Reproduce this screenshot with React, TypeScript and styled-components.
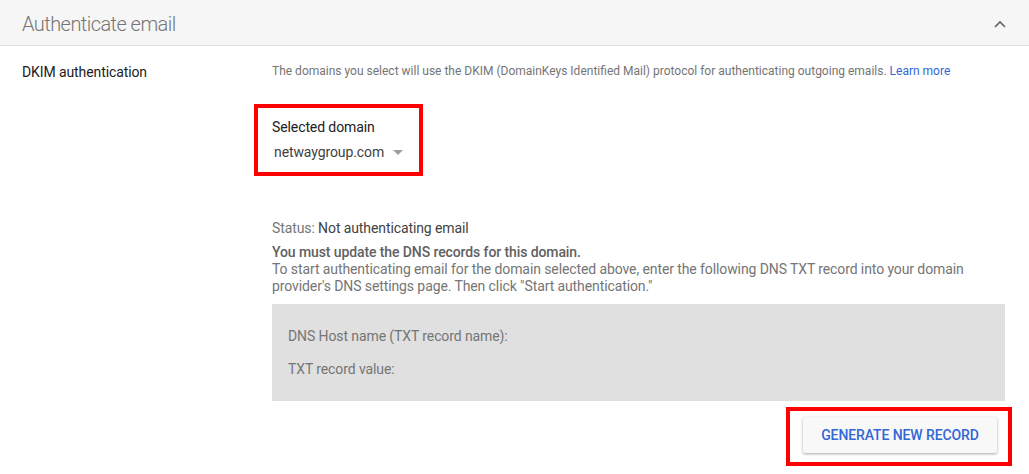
import React from "react";
import styled, { createGlobalStyle } from "styled-components";

const Global = createGlobalStyle`
  html, body { margin: 0; padding: 0; background: #ffffff; }
  body { font-family: Roboto, "Liberation Sans", Arial, sans-serif; -webkit-font-smoothing: antialiased; }
  * { box-sizing: border-box; }
`;

const Page = styled.div`
  width: 1029px;
  height: 474px;
  overflow: hidden;
  background: #fff;
`;

const Header = styled.div`
  height: 46px;
  display: flex;
  align-items: center;
  justify-content: space-between;
  padding: 2px 23px 0 22px;
  background: #f6f6f6;
  border-bottom: 1px solid #e0e0e0;
`;

const Title = styled.h2`
  margin: 0;
  font-size: 20px;
  font-weight: 300;
  color: #757575;
  letter-spacing: -0.55px;
`;

const Section = styled.div`
  display: grid;
  grid-template-columns: 250px 733px;
  padding: 16px 0 0 22px;
`;

const Label = styled.div`
  font-size: 14px;
  line-height: 20px;
  color: #212121;
  letter-spacing: -0.1px;
`;

const Content = styled.div`
  display: flex;
  flex-direction: column;
  align-items: flex-start;
  margin-top: -1px;
`;

const Description = styled.p`
  margin: 0;
  font-size: 12px;
  line-height: 20px;
  color: #757575;
  letter-spacing: 0;
`;

const Link = styled.a`
  color: #3367d6;
  text-decoration: none;
`;

const Highlight = styled.div`
  border: 4px solid #ff0000;
  margin: 23px 0 0 -18px;
`;

const DomainField = styled.div`
  padding: 9px 16px 10px 14px;
  display: flex;
  flex-direction: column;
  gap: 5px;
`;

const FieldLabel = styled.div`
  font-size: 14px;
  line-height: 20px;
  color: #212121;
  letter-spacing: -0.1px;
`;

const Select = styled.div`
  display: flex;
  align-items: center;
  gap: 9px;
  padding-left: 2px;
  font-size: 14px;
  line-height: 20px;
  color: #424242;
  letter-spacing: -0.1px;
`;

const Caret = styled.span`
  width: 0;
  height: 0;
  border-left: 5px solid transparent;
  border-right: 5px solid transparent;
  border-top: 5px solid #9e9e9e;
  margin-top: 1px;
`;

const Status = styled.div`
  margin-top: 42px;
  font-size: 14px;
  line-height: 20px;
  color: #757575;
  letter-spacing: -0.1px;
  b { font-weight: 400; color: #424242; }
`;

const Notice = styled.div`
  margin-top: 6px;
  font-size: 14px;
  line-height: 17px;
  color: #757575;
  letter-spacing: -0.1px;
  strong { font-weight: 500; color: #616161; display: block; }
`;

const RecordBox = styled.div`
  margin-top: 9px;
  width: 733px;
  height: 97px;
  background: #e0e0e0;
  padding: 22px 16px;
  display: flex;
  flex-direction: column;
  gap: 13px;
`;

const RecordLine = styled.div`
  font-size: 14px;
  line-height: 20px;
  color: #757575;
  letter-spacing: -0.1px;
`;

const ButtonRow = styled.div`
  width: 733px;
  display: flex;
  justify-content: flex-end;
  margin-top: 6px;
`;

const ButtonBox = styled.div`
  border: 4px solid #ff0000;
  padding: 6px 11px 9px 13px;
  margin-right: -7px;
`;

const Button = styled.button`
  height: 36px;
  width: 194px;
  padding: 0;
  border: none;
  border-radius: 2px;
  background: #f8f8f8;
  box-shadow: 0 1px 3px rgba(0, 0, 0, 0.35);
  font-family: Roboto, "Liberation Sans", Arial, sans-serif;
  font-size: 14px;
  font-weight: 500;
  color: #3367d6;
  letter-spacing: -0.1px;
  text-transform: uppercase;
  cursor: pointer;
`;

const Chevron = () => (
  <svg width="12" height="8" viewBox="0 0 12 8" fill="none">
    <polyline points="1,7 6,2 11,7" stroke="#616161" strokeWidth="1.6" />
  </svg>
);

export default function App() {
  return (
    <Page>
      <Global />
      <Header>
        <Title>Authenticate email</Title>
        <Chevron />
      </Header>
      <Section>
        <Label>DKIM authentication</Label>
        <Content>
          <Description>
            The domains you select will use the DKIM (DomainKeys Identified Mail) protocol for
            authenticating outgoing emails. <Link href="#">Learn more</Link>
          </Description>
          <Highlight>
            <DomainField>
              <FieldLabel>Selected domain</FieldLabel>
              <Select>
                netwaygroup.com
                <Caret />
              </Select>
            </DomainField>
          </Highlight>
          <Status>
            Status: <b>Not authenticating email</b>
          </Status>
          <Notice>
            <strong>You must update the DNS records for this domain.</strong>
            To start authenticating email for the domain selected above, enter the following DNS
            TXT record into your domain provider's DNS settings page. Then click "Start
            authentication."
          </Notice>
          <RecordBox>
            <RecordLine>DNS Host name (TXT record name):</RecordLine>
            <RecordLine>TXT record value:</RecordLine>
          </RecordBox>
          <ButtonRow>
            <ButtonBox>
              <Button>Generate new record</Button>
            </ButtonBox>
          </ButtonRow>
        </Content>
      </Section>
    </Page>
  );
}
